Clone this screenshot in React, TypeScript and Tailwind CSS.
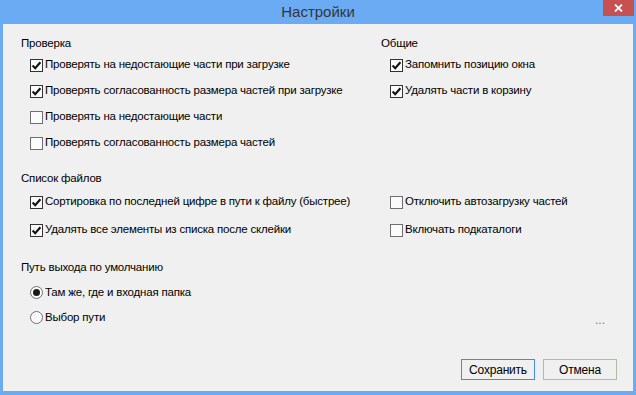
import React from "react";

function Check({ checked }: { checked: boolean }) {
  return (
    <span
      className={
        "relative inline-flex w-[13px] h-[13px] shrink-0 items-center justify-center border bg-[#fbfbfb] " +
        (checked ? "border-[#333333]" : "border-[#707070]")
      }
    >
      {checked && (
        <svg width="11" height="11" viewBox="0 0 11 11" className="absolute left-[0px] top-[0px]">
          <path d="M1.6 5.6 L4.2 8.2 L9.4 2.2" fill="none" stroke="#111" strokeWidth="2.1" />
        </svg>
      )}
    </span>
  );
}

function Radio({ checked }: { checked: boolean }) {
  return (
    <span className="relative inline-flex w-[13px] h-[13px] shrink-0 items-center justify-center rounded-full border border-[#707070] bg-[#fbfbfb]">
      {checked && <span className="w-[7px] h-[7px] rounded-full bg-[#1a1a1a]" />}
    </span>
  );
}

function CRow({ checked, label, h = "h-[26px]" }: { checked: boolean; label: string; h?: string }) {
  return (
    <div className={"flex items-center gap-[2px] pl-[9px] " + h}>
      <Check checked={checked} />
      <span className="whitespace-nowrap">{label}</span>
    </div>
  );
}

export default function App() {
  return (
    <div
      className="w-[636px] h-[395px] bg-[#6aabf4] flex flex-col overflow-hidden text-[11.5px] tracking-[-0.2px] text-black"
      style={{ fontFamily: '"Liberation Sans", Arial, sans-serif' }}
    >
      <div className="relative h-[24px] shrink-0 flex items-center justify-center">
        <span className="text-[15px] tracking-normal text-[#363636] leading-none mt-[-1px]">Настройки</span>
        <div className="absolute top-0 right-[2px] w-[31px] h-[16px] bg-[#c75050] flex items-center justify-center">
          <svg width="9" height="8" viewBox="0 0 9 8">
            <path d="M1 0.5 L8 7.5 M8 0.5 L1 7.5" stroke="#fff" strokeWidth="1.8" />
          </svg>
        </div>
      </div>
      <div className="flex-1 mx-[3px] mb-[4px] bg-[#f0f0f0] flex flex-col pl-[18px] pt-[12px] leading-none">
        <div className="flex">
          <div className="w-[360px] flex flex-col">
            <div className="h-[16px] flex items-center">Проверка</div>
            <CRow checked label="Проверять на недостающие части при загрузке" />
            <CRow checked label="Проверять согласованность размера частей при загрузке" />
            <CRow checked={false} label="Проверять на недостающие части" />
            <CRow checked={false} label="Проверять согласованность размера частей" />
          </div>
          <div className="flex flex-col">
            <div className="h-[16px] flex items-center">Общие</div>
            <CRow checked label="Запомнить позицию окна" />
            <CRow checked label="Удалять части в корзину" />
          </div>
        </div>

        <div className="mt-[15px] h-[16px] flex items-center">Список файлов</div>
        <div className="mt-[1px] grid grid-cols-[360px_1fr]">
          <CRow checked label="Сортировка по последней цифре в пути к файлу (быстрее)" h="h-[28px]" />
          <CRow checked={false} label="Отключить автозагрузку частей" h="h-[28px]" />
          <CRow checked label="Удалять все элементы из списка после склейки" h="h-[28px]" />
          <CRow checked={false} label="Включать подкаталоги" h="h-[28px]" />
        </div>

        <div className="mt-[16px] h-[16px] flex items-center">Путь выхода по умолчанию</div>
        <div className="mt-[4px] h-[25px] flex items-center gap-[2px] pl-[9px]">
          <Radio checked />
          <span>Там же, где и входная папка</span>
        </div>
        <div className="h-[25px] flex items-center pl-[9px] pr-[28px]">
          <Radio checked={false} />
          <span className="ml-[2px]">Выбор пути</span>
          <span className="ml-auto text-[#7a6f96] text-[12px] tracking-normal pt-[5px]">...</span>
        </div>

        <div className="mt-[29px] flex justify-end gap-[8px] pr-[16px]">
          <button className="w-[74px] h-[21px] border border-[#3c8fe3] bg-[#f0f0f0] flex items-center justify-center text-[12px]">
            Сохранить
          </button>
          <button className="w-[74px] h-[21px] border border-[#adbda4] bg-[#f0f0f0] flex items-center justify-center text-[12px]">
            Отмена
          </button>
        </div>
      </div>
    </div>
  );
}
